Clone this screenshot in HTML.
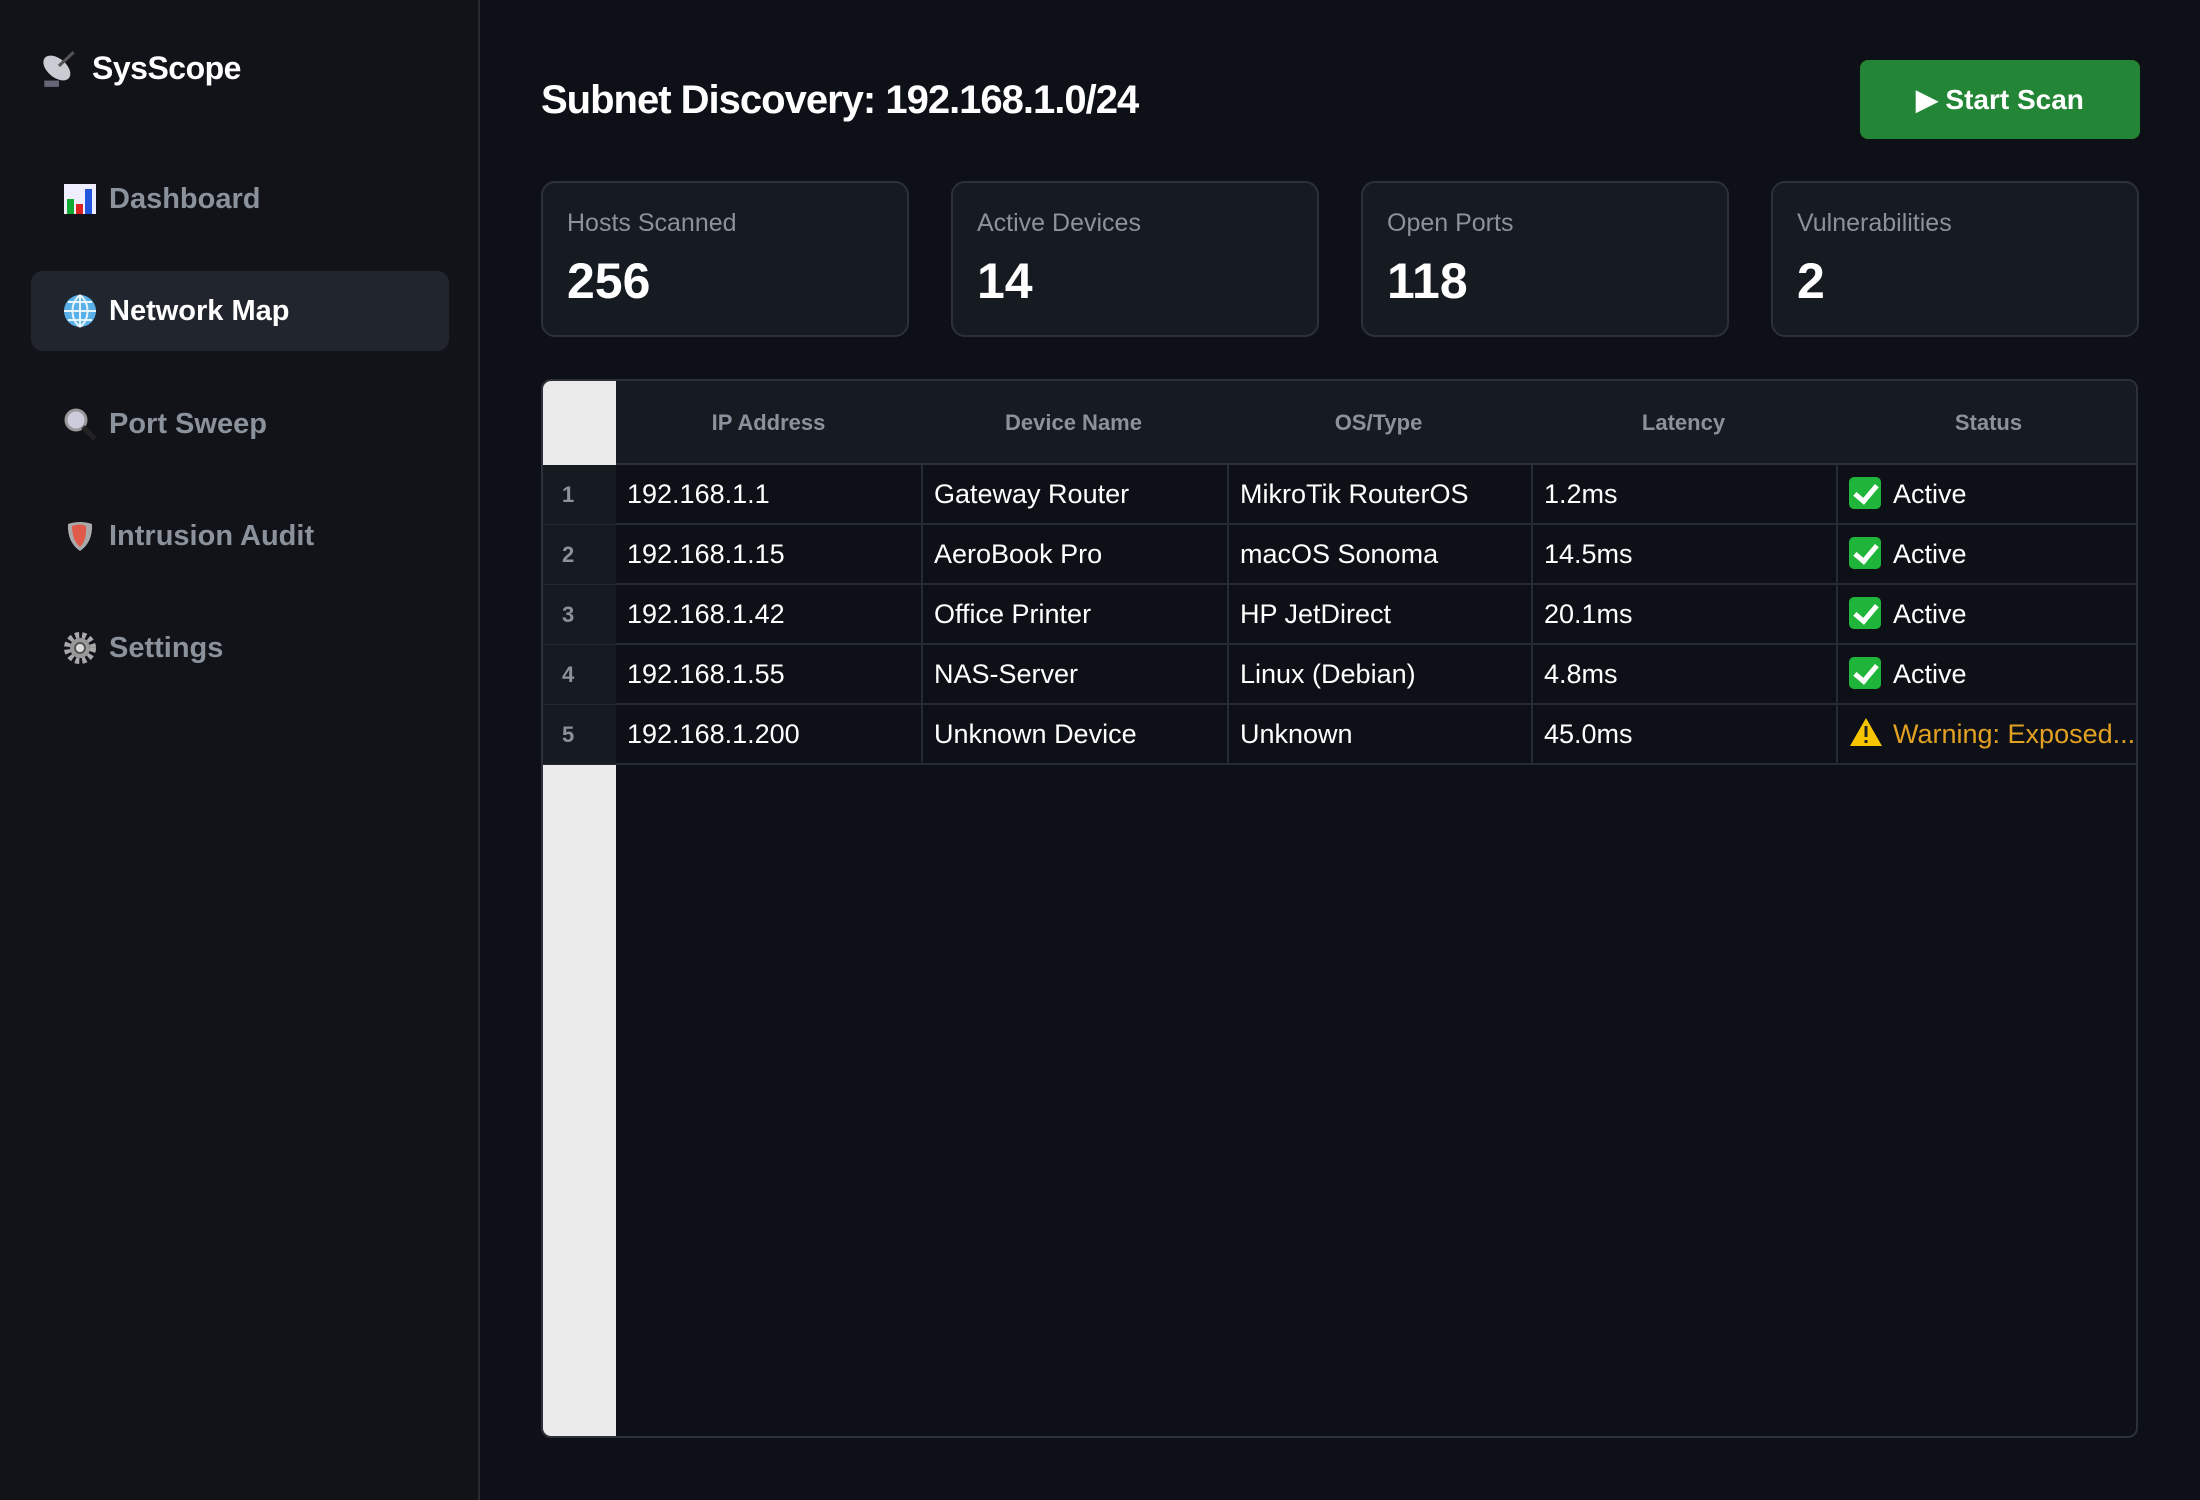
<!DOCTYPE html>
<html><head><meta charset="utf-8"><style>
*{margin:0;padding:0;box-sizing:border-box}
body{width:2200px;height:1500px;background:#0d1017;font-family:"Liberation Sans",sans-serif;color:#fff;position:relative;overflow:hidden}
.side{position:absolute;left:0;top:0;width:480px;height:1500px;background:#111319;border-right:2px solid #262a31}
.logo{position:absolute;left:38px;top:46px;display:flex;align-items:center;font-size:32px;font-weight:700;letter-spacing:-0.5px}
.logo svg{margin-right:10px}
.nav{position:absolute;left:31px;width:418px;height:80px;border-radius:12px;display:flex;align-items:center;padding-left:31px;font-size:29px;font-weight:700;color:#8b929c}
.nav.act{background:#21252d;color:#fff}
.nav svg{width:36px;height:36px;margin-right:11px;flex:none}
.title{position:absolute;left:541px;top:78px;font-size:40px;font-weight:700;letter-spacing:-1px}
.btn{position:absolute;left:1860px;top:60px;width:280px;height:79px;background:#238636;border-radius:8px;display:flex;align-items:center;justify-content:center;font-size:28px;font-weight:700}
.card{position:absolute;top:181px;width:368px;height:156px;background:#161a21;border:2px solid #2c3139;border-radius:14px;padding:26px 0 0 24px}
.card .l{font-size:25px;color:#8b929c}
.card .v{font-size:50px;font-weight:700;margin-top:14px}
.tbl{position:absolute;left:541px;top:379px;width:1597px;height:1059px;border:2px solid #2c3139;border-radius:10px;background:#0d1017;overflow:hidden}
.gut{position:absolute;left:0;top:0;width:73px;height:100%;background:#ebebeb}
.hdr{position:absolute;left:73px;top:0;right:0;height:84px;background:#161a21;border-bottom:2px solid #2c3139}
.hdr div{position:absolute;top:0;height:84px;line-height:84px;text-align:center;font-size:22px;font-weight:700;color:#8b929c;width:305px}
.row{position:absolute;left:0;right:0;height:60px;border-bottom:2px solid #262a31}
.row .n{position:absolute;left:0;top:0;width:73px;height:59px;background:#161a21;color:#8b929c;font-size:22px;font-weight:700;line-height:59px;padding-left:19px}
.row .c{position:absolute;top:0;height:59px;line-height:59px;font-size:27px;padding-left:11px;border-left:2px solid #262a31;width:306px;white-space:nowrap}
.chk{display:inline-block;width:32px;height:32px;background:#1fb43a;border-radius:5px;vertical-align:-6px;margin-right:12px;position:relative}
.chk:after{content:"";position:absolute;left:10px;top:3px;width:9px;height:18px;border:solid #fff;border-width:0 5px 5px 0;transform:rotate(40deg)}
</style></head><body>
<div class="side">
 <div class="logo"><svg width="44" height="44" viewBox="0 0 42 42"><ellipse cx="18" cy="21" rx="15" ry="9" transform="rotate(40 18 21)" fill="#c9ccd2"/><path d="M20 19 L34 6" stroke="#555" stroke-width="3"/><rect x="6" y="33" width="14" height="6" fill="#667"/></svg>SysScope</div>
 <div class="nav" style="top:159px"><svg viewBox="0 0 36 36"><rect x="2" y="3" width="32" height="30" fill="#eef"/><rect x="5" y="18" width="7" height="15" fill="#1a3"/><rect x="14" y="23" width="7" height="10" fill="#d22"/><rect x="23" y="8" width="7" height="25" fill="#25d"/></svg>Dashboard</div>
 <div class="nav act" style="top:271px"><svg viewBox="0 0 36 36"><circle cx="18" cy="18" r="16" fill="#5ab0e8"/><path d="M2 18H34M18 2V34M6 9H30M6 27H30M18 2C8 10 8 26 18 34M18 2C28 10 28 26 18 34" stroke="#e8f4fb" stroke-width="2" fill="none"/></svg>Network Map</div>
 <div class="nav" style="top:384px"><svg viewBox="0 0 36 36"><circle cx="14" cy="14" r="10" fill="#ccd" stroke="#999" stroke-width="3"/><path d="M21 21L33 33" stroke="#222" stroke-width="5"/></svg>Port Sweep</div>
 <div class="nav" style="top:496px"><svg viewBox="0 0 36 36"><path d="M6 6Q18 2 30 6Q31 24 18 33Q5 24 6 6Z" fill="#aaa"/><path d="M10 8Q18 5 24 8Q25 22 18 29Q10 22 10 8Z" fill="#e05a4a"/></svg>Intrusion Audit</div>
 <div class="nav" style="top:608px"><svg viewBox="0 0 36 36"><circle cx="18" cy="18" r="13" fill="none" stroke="#aaa" stroke-width="6" stroke-dasharray="4 3"/><circle cx="18" cy="18" r="10" fill="#999"/><circle cx="18" cy="18" r="5" fill="#ddd" stroke="#555" stroke-width="2"/></svg>Settings</div>
</div>
<div class="title">Subnet Discovery: 192.168.1.0/24</div>
<div class="btn">▶ Start Scan</div>
<div class="card" style="left:541px"><div class="l">Hosts Scanned</div><div class="v">256</div></div>
<div class="card" style="left:951px"><div class="l">Active Devices</div><div class="v">14</div></div>
<div class="card" style="left:1361px"><div class="l">Open Ports</div><div class="v">118</div></div>
<div class="card" style="left:1771px"><div class="l">Vulnerabilities</div><div class="v">2</div></div>
<div class="tbl">
 <div class="gut"></div>
 <div class="hdr"><div style="left:0">IP Address</div><div style="left:305px">Device Name</div><div style="left:610px">OS/Type</div><div style="left:915px">Latency</div><div style="left:1220px">Status</div></div>
 <div class="row" style="top:84px"><div class="n">1</div><div class="c" style="left:73px;border:0">192.168.1.1</div><div class="c" style="left:378px">Gateway Router</div><div class="c" style="left:684px">MikroTik RouterOS</div><div class="c" style="left:988px">1.2ms</div><div class="c" style="left:1293px"><span class="chk"></span>Active</div></div>
 <div class="row" style="top:144px"><div class="n">2</div><div class="c" style="left:73px;border:0">192.168.1.15</div><div class="c" style="left:378px">AeroBook Pro</div><div class="c" style="left:684px">macOS Sonoma</div><div class="c" style="left:988px">14.5ms</div><div class="c" style="left:1293px"><span class="chk"></span>Active</div></div>
 <div class="row" style="top:204px"><div class="n">3</div><div class="c" style="left:73px;border:0">192.168.1.42</div><div class="c" style="left:378px">Office Printer</div><div class="c" style="left:684px">HP JetDirect</div><div class="c" style="left:988px">20.1ms</div><div class="c" style="left:1293px"><span class="chk"></span>Active</div></div>
 <div class="row" style="top:264px"><div class="n">4</div><div class="c" style="left:73px;border:0">192.168.1.55</div><div class="c" style="left:378px">NAS-Server</div><div class="c" style="left:684px">Linux (Debian)</div><div class="c" style="left:988px">4.8ms</div><div class="c" style="left:1293px"><span class="chk"></span>Active</div></div>
 <div class="row" style="top:324px"><div class="n">5</div><div class="c" style="left:73px;border:0">192.168.1.200</div><div class="c" style="left:378px">Unknown Device</div><div class="c" style="left:684px">Unknown</div><div class="c" style="left:988px">45.0ms</div><div class="c" style="left:1293px;color:#e3a122"><svg width="34" height="30" viewBox="0 0 34 30" style="vertical-align:-4px;margin-right:10px"><path d="M17 1L33 29H1Z" fill="#f7c600"/><rect x="15.5" y="9" width="3" height="11" fill="#222"/><rect x="15.5" y="23" width="3" height="3" fill="#222"/></svg>Warning: Exposed...</div></div>
</div>
</body></html>
